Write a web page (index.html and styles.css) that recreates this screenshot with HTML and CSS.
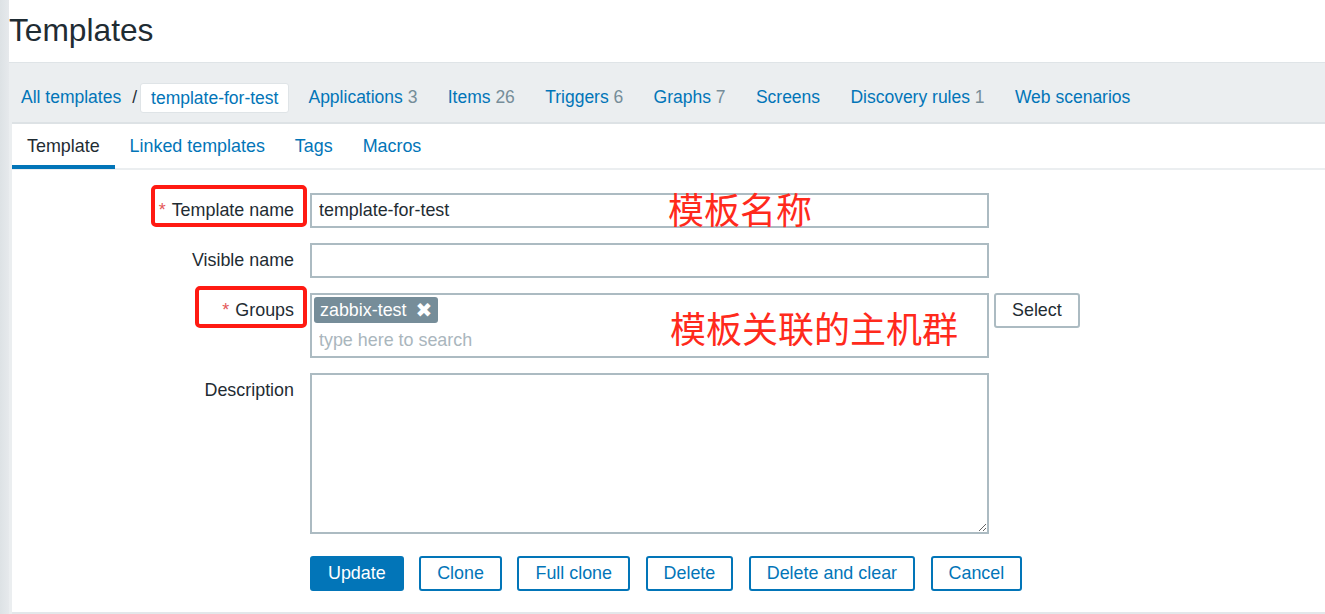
FILE: index.html
```html
<!DOCTYPE html>
<html lang="en">
<head>
<meta charset="utf-8">
<title>Templates</title>
<link rel="stylesheet" href="styles.css">
</head>
<body>
<div class="app">
  <div class="strip"></div>
  <div class="main">
    <header class="header">
      <h1 class="title">Templates</h1>
    </header>
    <div class="area">
      <nav class="breadcrumbs">
        <a class="crumb" href="#">All templates</a>
        <span class="sep">/</span>
        <span class="crumb-box">template-for-test</span>
        <a class="link first" href="#">Applications <span class="count">3</span></a>
        <a class="link" href="#">Items <span class="count">26</span></a>
        <a class="link" href="#">Triggers <span class="count">6</span></a>
        <a class="link" href="#">Graphs <span class="count">7</span></a>
        <a class="link" href="#">Screens</a>
        <a class="link" href="#">Discovery rules <span class="count">1</span></a>
        <a class="link" href="#">Web scenarios</a>
      </nav>
      <section class="content">
        <ul class="tabs">
          <li class="tab active">Template</li>
          <li class="tab">Linked templates</li>
          <li class="tab">Tags</li>
          <li class="tab">Macros</li>
        </ul>
        <form class="form">
          <label class="label"><span class="req">*</span>Template name</label>
          <div class="field"><input class="input" type="text" value="template-for-test"></div>

          <label class="label">Visible name</label>
          <div class="field"><input class="input" type="text" value=""></div>

          <label class="label"><span class="req">*</span>Groups</label>
          <div class="field group-field">
            <div class="multiselect">
              <span class="chip">zabbix-test<span class="chip-x">&#10006;</span></span>
              <input class="ms-input" type="text" placeholder="type here to search">
            </div>
            <button type="button" class="btn-select">Select</button>
          </div>

          <label class="label">Description</label>
          <div class="field"><textarea class="textarea"></textarea></div>

          <div class="buttons">
            <button type="button" class="btn primary">Update</button>
            <button type="button" class="btn">Clone</button>
            <button type="button" class="btn">Full clone</button>
            <button type="button" class="btn">Delete</button>
            <button type="button" class="btn">Delete and clear</button>
            <button type="button" class="btn">Cancel</button>
          </div>
        </form>
        <div class="mark mark-name"></div>
        <div class="mark mark-groups"></div>
        <div class="note note-name">模板名称</div>
        <div class="note note-groups">模板关联的主机群</div>
      </section>
    </div>
  </div>
</div>
</body>
</html>
```

FILE: styles.css
```css
* { box-sizing: border-box; }

html, body {
  margin: 0;
  padding: 0;
}

body {
  font-family: "Liberation Sans", Arial, sans-serif;
  font-size: 17.9px;
  color: #1f2c33;
  background: #ebeef0;
  overflow: hidden;
}

.app {
  display: flex;
  height: 614px;
}

.strip {
  width: 9px;
  flex: none;
  background: linear-gradient(to right, #dde2e5, #e6e9ec);
}

.main {
  flex: 1;
  display: flex;
  flex-direction: column;
  min-width: 0;
}

.header {
  height: 63px;
  background: #ffffff;
  border-bottom: 1px solid #dfe4e7;
  padding-left: 0;
}

.title {
  margin: 0;
  font-size: 31.7px;
  font-weight: normal;
  line-height: 60px;
  color: #1f2c33;
}

.area {
  flex: 1;
  display: flex;
  flex-direction: column;
  padding-left: 3px;
}

.breadcrumbs {
  height: 59px;
  display: flex;
  align-items: center;
  padding: 10px 0 0 9px;
  white-space: nowrap;
  font-size: 17.5px;
}

.crumb, .link {
  color: #0275b8;
  text-decoration: none;
}

.sep {
  color: #1f2c33;
  margin: 0 3px 0 11px;
}

.crumb-box {
  height: 30px;
  line-height: 28px;
  padding: 0 10px;
  background: #ffffff;
  border: 1px solid #dfe4e7;
  border-radius: 3px;
  color: #0275b8;
}

.link { margin-left: 30.3px; }
.link.first { margin-left: 19px; }

.count { color: #768d99; }

.content {
  position: relative;
  flex: 1;
  background: #ffffff;
  border-top: 2px solid #dde2e5;
  border-bottom: 2px solid #e3e7ea;
}

.tabs {
  list-style: none;
  margin: 0;
  padding: 0;
  display: flex;
  height: 46px;
  border-bottom: 2px solid #ebeef0;
}

.tab {
  height: 44px;
  line-height: 44px;
  padding: 0 15px;
  color: #0275b8;
  white-space: nowrap;
}

.tab.active {
  color: #1f2c33;
  border-bottom: 4px solid #0275b8;
  height: 45px;
}

.form {
  display: grid;
  grid-template-columns: 282px 679px;
  column-gap: 16px;
  row-gap: 15px;
  padding-top: 23px;
}

.label {
  text-align: right;
  line-height: 35px;
  align-self: start;
  white-space: nowrap;
}

.req {
  color: #e45959;
  margin-right: 6px;
}

.field { min-width: 0; }

.input {
  display: block;
  width: 679px;
  height: 35px;
  border: 2px solid #acbbc2;
  padding: 0 7px;
  font-family: inherit;
  font-size: 17.9px;
  color: #1f2c33;
  background: #ffffff;
  outline: none;
}

.group-field {
  display: flex;
  align-items: flex-start;
  gap: 5px;
}

.multiselect {
  width: 679px;
  height: 65px;
  flex: none;
  border: 2px solid #acbbc2;
  padding: 2px 2px 0 2px;
  display: flex;
  flex-direction: column;
  align-items: flex-start;
}

.chip {
  display: inline-flex;
  align-items: center;
  height: 26px;
  padding: 0 6px;
  background: #768d99;
  color: #ffffff;
  border-radius: 3px;
  white-space: nowrap;
}

.chip-x {
  margin-left: 9px;
  font-size: 20px;
  line-height: 1;
  font-family: "DejaVu Sans", sans-serif;
}

.ms-input {
  width: 100%;
  height: 30px;
  margin-top: 2px;
  border: none;
  padding: 0 5px;
  font-family: inherit;
  font-size: 17.9px;
  color: #1f2c33;
  outline: none;
  background: transparent;
}

.ms-input::placeholder { color: #aab6bd; }

.btn-select {
  height: 35px;
  padding: 0 16px;
  border: 2px solid #acbbc2;
  border-radius: 3px;
  background: #ffffff;
  color: #1f2c33;
  font-family: inherit;
  font-size: 17.9px;
  white-space: nowrap;
}

.textarea {
  display: block;
  width: 679px;
  height: 161px;
  border: 2px solid #acbbc2;
  padding: 5px 7px;
  font-family: inherit;
  font-size: 17.9px;
  outline: none;
}

.buttons {
  grid-column: 2;
  display: flex;
  gap: 15.5px;
  margin-top: 7px;
}

.btn {
  height: 35px;
  padding: 0 16px;
  border: 2px solid #0275b8;
  border-radius: 3px;
  background: #ffffff;
  color: #0275b8;
  font-family: inherit;
  font-size: 17.9px;
  white-space: nowrap;
}

.btn.primary {
  background: #0275b8;
  color: #ffffff;
}

.mark {
  position: absolute;
  border: 4px solid #ff1a12;
  border-radius: 5px;
  pointer-events: none;
}

.mark-name { left: 139px; top: 61px; width: 156px; height: 42px; }
.mark-groups { left: 183px; top: 162px; width: 112px; height: 42px; }

.note {
  position: absolute;
  font-family: "Noto Sans CJK SC", sans-serif;
  font-size: 36px;
  line-height: 36px;
  color: #ff2a1c;
  white-space: nowrap;
}

.note-name { left: 656px; top: 66px; }
.note-groups { left: 658px; top: 185px; }
```
